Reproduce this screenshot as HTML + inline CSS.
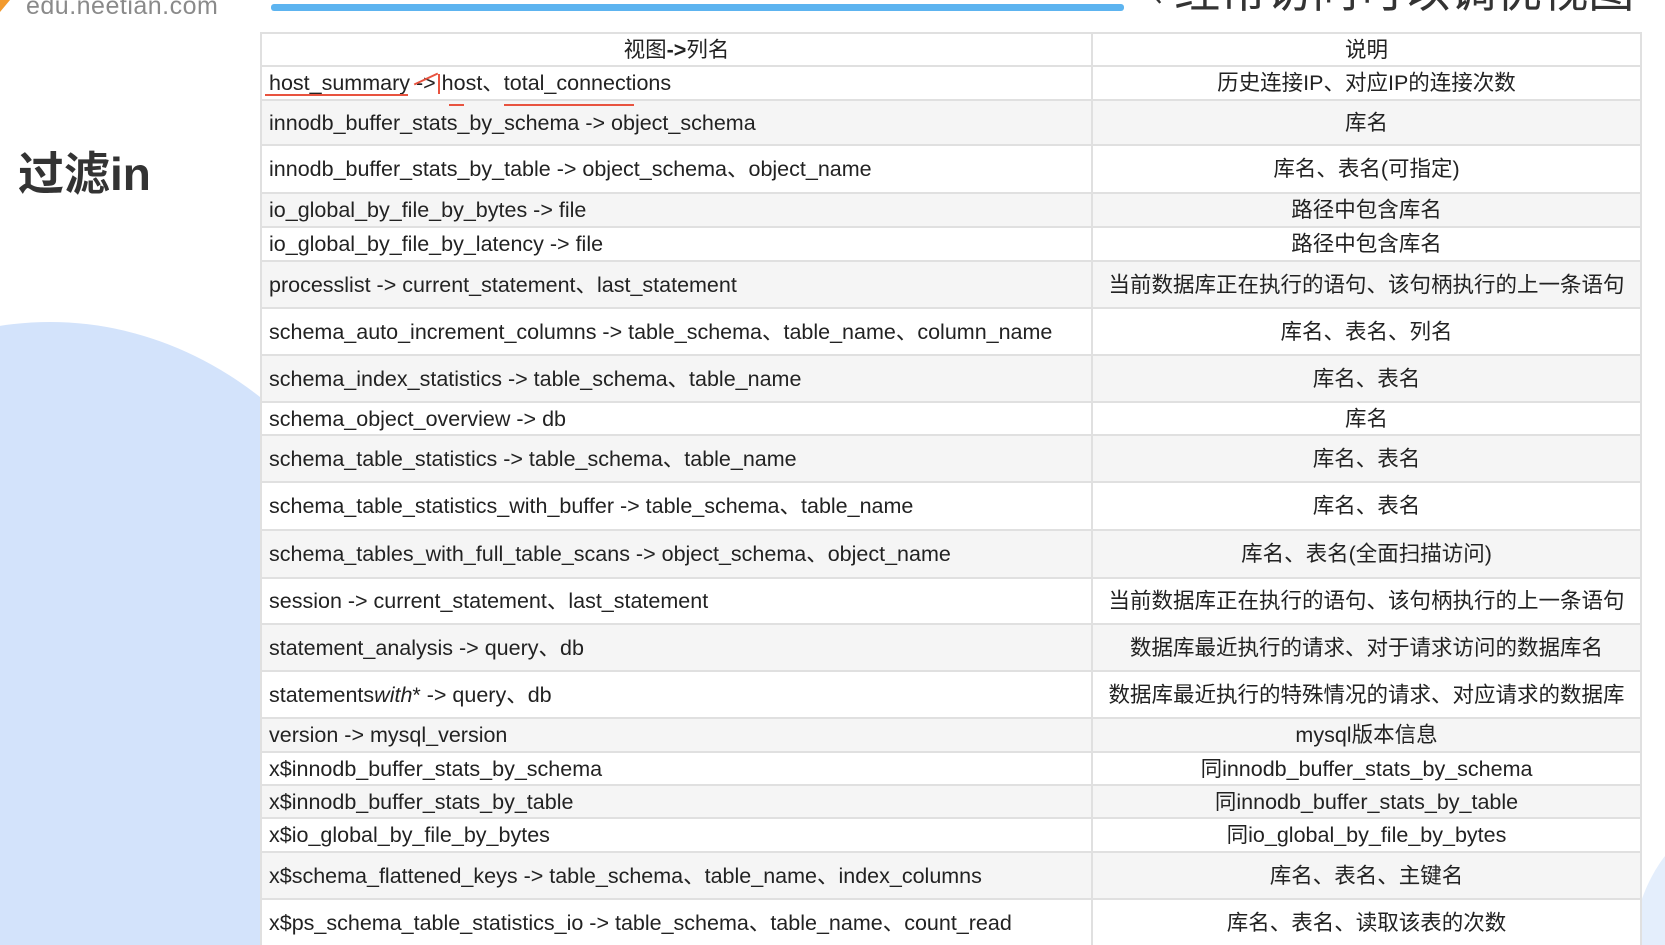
<!DOCTYPE html>
<html><head><meta charset="utf-8"><style>
*{margin:0;padding:0;box-sizing:border-box}
html,body{width:1665px;height:945px;overflow:hidden;background:#fff;position:relative;font-family:"Liberation Sans","Noto Sans CJK SC",sans-serif}
.blob{position:absolute;left:-330px;top:322px;width:760px;height:900px;border-radius:50%;background:#d3e3fb}
.blob2{position:absolute;left:1630px;top:820px;width:200px;height:300px;border-radius:50%;background:#e4eefc}
.logo{position:absolute;left:26px;top:-8px;font-size:25px;color:#8a8a8a;letter-spacing:0.5px}
.orange{position:absolute;left:0;top:0;width:10px;height:12px;background:#f29a2e;clip-path:polygon(0 0,100% 0,0 100%)}
.bar{position:absolute;left:271px;top:4px;width:853px;height:7px;background:#5db4f0;border-radius:3px}
.title{position:absolute;left:1150px;top:-42px;font-size:46px;line-height:60px;color:#333;white-space:nowrap;font-family:"Noto Sans CJK SC",sans-serif}
.h{position:absolute;left:18px;top:148px;font-size:46px;line-height:52px;font-weight:bold;color:#333;font-family:"Liberation Sans","Noto Sans CJK SC",sans-serif}
table{position:absolute;left:260px;top:32px;width:1382px;border-collapse:collapse;font-size:21.5px;line-height:24px;color:#222;table-layout:fixed}
td{border:2px solid #e0e0e0;padding:0 7px;white-space:nowrap;vertical-align:middle;overflow:hidden}
td:first-child{width:831px}
td:last-child{text-align:center}
tr{background:#fff}
tr:nth-child(odd){background:#f5f5f5}
tr:first-child{background:#fff}
.r{position:absolute;background:#e8533f;height:2px}
</style></head><body>
<div class="blob"></div><div class="blob2"></div>
<div class="orange"></div>
<div class="logo">edu.neetian.com</div>
<div class="bar"></div>
<div class="title">‹ 经常访问可以调优视图</div>
<div class="h">过滤in</div>
<table>
<tr style="height:33px"><td style="text-align:center">视图<b>-&gt;</b>列名</td><td>说明</td></tr>
<tr style="height:34px"><td>host_summary -&gt; host、total_connections</td><td>历史连接IP、对应IP的连接次数</td></tr>
<tr style="height:45px"><td>innodb_buffer_stats_by_schema -&gt; object_schema</td><td>库名</td></tr>
<tr style="height:48px"><td>innodb_buffer_stats_by_table -&gt; object_schema、object_name</td><td>库名、表名(可指定)</td></tr>
<tr style="height:34px"><td>io_global_by_file_by_bytes -&gt; file</td><td>路径中包含库名</td></tr>
<tr style="height:34px"><td>io_global_by_file_by_latency -&gt; file</td><td>路径中包含库名</td></tr>
<tr style="height:47px"><td>processlist -&gt; current_statement、last_statement</td><td>当前数据库正在执行的语句、该句柄执行的上一条语句</td></tr>
<tr style="height:47px"><td>schema_auto_increment_columns -&gt; table_schema、table_name、column_name</td><td>库名、表名、列名</td></tr>
<tr style="height:47px"><td>schema_index_statistics -&gt; table_schema、table_name</td><td>库名、表名</td></tr>
<tr style="height:33px"><td>schema_object_overview -&gt; db</td><td>库名</td></tr>
<tr style="height:47px"><td>schema_table_statistics -&gt; table_schema、table_name</td><td>库名、表名</td></tr>
<tr style="height:48px"><td>schema_table_statistics_with_buffer -&gt; table_schema、table_name</td><td>库名、表名</td></tr>
<tr style="height:48px"><td>schema_tables_with_full_table_scans -&gt; object_schema、object_name</td><td>库名、表名(全面扫描访问)</td></tr>
<tr style="height:46px"><td>session -&gt; current_statement、last_statement</td><td>当前数据库正在执行的语句、该句柄执行的上一条语句</td></tr>
<tr style="height:47px"><td>statement_analysis -&gt; query、db</td><td>数据库最近执行的请求、对于请求访问的数据库名</td></tr>
<tr style="height:47px"><td>statements<i>with</i>* -&gt; query、db</td><td>数据库最近执行的特殊情况的请求、对应请求的数据库</td></tr>
<tr style="height:34px"><td>version -&gt; mysql_version</td><td>mysql版本信息</td></tr>
<tr style="height:33px"><td>x$innodb_buffer_stats_by_schema</td><td>同innodb_buffer_stats_by_schema</td></tr>
<tr style="height:33px"><td>x$innodb_buffer_stats_by_table</td><td>同innodb_buffer_stats_by_table</td></tr>
<tr style="height:34px"><td>x$io_global_by_file_by_bytes</td><td>同io_global_by_file_by_bytes</td></tr>
<tr style="height:47px"><td>x$schema_flattened_keys -&gt; table_schema、table_name、index_columns</td><td>库名、表名、主键名</td></tr>
<tr style="height:47px"><td>x$ps_schema_table_statistics_io -&gt; table_schema、table_name、count_read</td><td>库名、表名、读取该表的次数</td></tr>
</table>
<div class="r" style="left:265px;top:94px;width:143px"></div>
<div class="r" style="left:413px;top:78px;width:26px;transform:rotate(-25deg)"></div>
<div class="r" style="left:438px;top:74px;width:2px;height:20px"></div>
<div class="r" style="left:449px;top:104px;width:15px"></div>
<div class="r" style="left:504px;top:104px;width:130px"></div>
</body></html>
